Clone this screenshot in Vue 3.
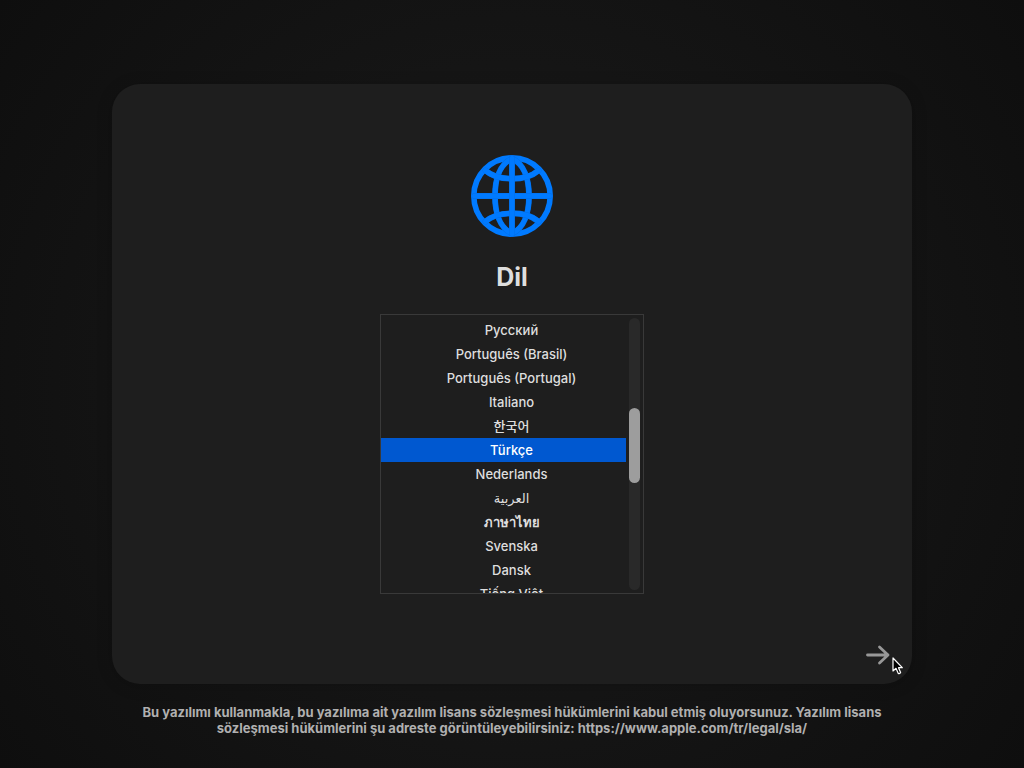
<script setup>
import { ref } from 'vue'

const languages = [
  { code: 'ru', name: 'Русский' },
  { code: 'pt-BR', name: 'Português (Brasil)' },
  { code: 'pt-PT', name: 'Português (Portugal)' },
  { code: 'it', name: 'Italiano' },
  { code: 'ko', name: '한국어' },
  { code: 'tr', name: 'Türkçe' },
  { code: 'nl', name: 'Nederlands' },
  { code: 'ar', name: 'العربية' },
  { code: 'th', name: 'ภาษาไทย' },
  { code: 'sv', name: 'Svenska' },
  { code: 'da', name: 'Dansk' },
  { code: 'vi', name: 'Tiếng Việt' },
]
const globeLines = [
  'M41 3.5C29 9 24 24 24 41S29 73 41 78.5',
  'M41 3.5C53 9 58 24 58 41S53 73 41 78.5',
  'M14.5 15.5C27 26.5 55 26.5 67.5 15.5',
  'M14.5 66.5C27 55.5 55 55.5 67.5 66.5',
  'M3.5 41H78.5',
  'M41 3.5V78.5',
]
const selected = ref('tr')
</script>

<template>
  <div class="screen">
    <main class="panel">
      <svg class="globe" viewBox="0 0 82 82" aria-hidden="true">
        <g fill="none" stroke-linecap="round">
          <circle cx="41" cy="41" r="38.2" stroke="#007aff" stroke-width="5.6" />
          <template v-for="d in globeLines" :key="d">
            <path :d="d" stroke="#006fe8" stroke-width="5.8" />
            <path :d="d" stroke="#007aff" stroke-width="5" />
          </template>
        </g>
      </svg>
      <h1 id="title">Dil</h1>
      <div class="picker">
        <div class="list" role="radiogroup" aria-labelledby="title">
          <label
            v-for="lang in languages"
            :key="lang.code"
            class="row"
            :class="{ active: selected === lang.code }"
            :lang="lang.code"
          >
            <input v-model="selected" type="radio" name="language" :value="lang.code" />
            <span>{{ lang.name }}</span>
          </label>
        </div>
        <div class="track" aria-hidden="true"><div class="thumb"></div></div>
      </div>
      <button class="next" type="button" aria-labelledby="title">
        <svg viewBox="0 0 24 20" aria-hidden="true">
          <path d="M1.5 10H22M13.5 2L22 10L13.5 18" fill="none" stroke="#989898" stroke-width="2.8" stroke-linecap="round" stroke-linejoin="round" />
        </svg>
      </button>
      <svg class="cursor" viewBox="0 0 12 18" aria-hidden="true">
        <path d="M1 1V14L4 11.3L6.3 16.4Q7.4 17 8.6 15.6L6.5 10.7H10.3Z" fill="#000" stroke="#fff" stroke-width="1.2" stroke-linejoin="round" />
      </svg>
    </main>
    <footer>
      Bu yazılımı kullanmakla, bu yazılıma ait yazılım lisans sözleşmesi hükümlerini kabul etmiş oluyorsunuz. Yazılım lisans sözleşmesi hükümlerini şu adreste görüntüleyebilirsiniz: <a href="https://www.apple.com/tr/legal/sla/">https://www.apple.com/tr/legal/sla/</a>
    </footer>
  </div>
</template>

<style>
body {
  margin: 0;
  background: #101010;
}
</style>

<style scoped>
.screen {
  box-sizing: border-box;
  min-height: 100vh;
  padding: 84px 24px 32px;
  display: flex;
  flex-direction: column;
  align-items: center;
  background: radial-gradient(circle at center, #191919 0%, #151515 50%, #0e0e0e 100%);
  font-family: Inter, "Noto Sans CJK KR", "Noto Sans", "DejaVu Sans", sans-serif;
  color: #dedede;
}
.panel {
  position: relative;
  box-sizing: border-box;
  width: 100%;
  max-width: 800px;
  padding: 71px 22px 19px;
  display: flex;
  flex-direction: column;
  align-items: center;
  border-radius: 28px;
  background: #1e1e1e;
  box-shadow: 0 2px 16px rgba(0, 0, 0, 0.2);
}
.globe {
  width: 82px;
  height: 82px;
}
h1 {
  margin: 24px 0 21px;
  font-size: 25px;
  line-height: 32px;
  font-weight: 700;
}
.picker {
  box-sizing: border-box;
  width: 264px;
  max-width: 100%;
  height: 280px;
  padding-right: 3px;
  display: flex;
  gap: 3px;
  border: 1px solid #393939;
}
.list {
  box-sizing: border-box;
  flex: 1;
  padding-top: 3px;
  overflow-y: auto;
  scrollbar-width: none;
}
.row {
  height: 24px;
  padding-left: 16px;
  display: flex;
  justify-content: center;
  font-size: 13px;
  line-height: 24px;
  font-weight: 500;
}
.row:lang(th) {
  font-weight: 600;
}
.row input {
  appearance: none;
  width: 0;
  height: 0;
  margin: 0;
  outline: none;
}
.row.active {
  background: #0058d0;
  color: #fff;
}
.track {
  width: 11px;
  margin: 3px 0;
  border-radius: 6px;
  background: #292929;
}
.thumb {
  height: 75px;
  margin-top: 90px;
  border-radius: 6px;
  background: #9d9d9d;
}
.next {
  width: 24px;
  height: 20px;
  margin-top: 51px;
  padding: 0;
  align-self: flex-end;
  border: 0;
  background: none;
}
.next svg {
  display: block;
  width: 24px;
  height: 20px;
}
.cursor {
  position: absolute;
  right: 8px;
  bottom: 9px;
  width: 12px;
  height: 18px;
}
footer {
  max-width: 780px;
  margin-top: 20px;
  font-size: 13px;
  line-height: 16px;
  font-weight: 700;
  text-align: center;
  color: #b0b0b0;
}
footer a {
  color: inherit;
  text-decoration: none;
}
</style>
